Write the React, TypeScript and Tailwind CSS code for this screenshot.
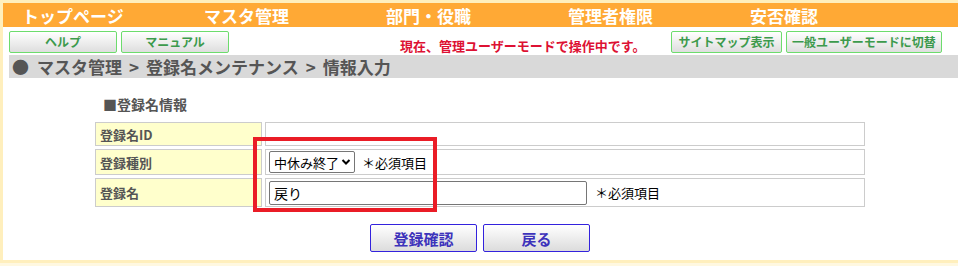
import React from "react";

const font = { fontFamily: '"Noto Sans CJK JP", "Noto Sans", sans-serif' };

function GreenBtn({ children, w }: { children: React.ReactNode; w: string }) {
  return (
    <div
      className={`${w} h-[22px] flex items-center justify-center border border-[#6ddc6d] rounded-[2px] bg-gradient-to-b from-white to-[#dedede] text-[#3c9a4c] text-[12px] font-bold leading-none whitespace-nowrap`}
    >
      {children}
    </div>
  );
}

function BlueBtn({ children }: { children: React.ReactNode }) {
  return (
    <div className="w-[107px] h-[28px] flex items-center justify-center border border-[#3322dd] rounded-[2px] bg-gradient-to-b from-white to-[#dcdcdc] text-[#3d33bb] text-[15px] font-bold leading-none">
      {children}
    </div>
  );
}

export default function App() {
  const nav = ["トップページ", "マスタ管理", "部門・役職", "管理者権限", "安否確認"];
  return (
    <div className="w-[958px] h-[266px] bg-[#fff8e0] overflow-hidden" style={font}>
      <div className="h-[263px] bg-white border-l-[3px] border-t-[3px] border-b-[3px] border-[#ffefbd] flex flex-col">
        <div className="h-[24px] bg-[#ffa935] flex items-center">
          {nav.map((n) => (
            <div key={n} className="w-[182px] pl-[19px] text-white font-bold text-[17px] leading-none shrink-0">
              {n}
            </div>
          ))}
        </div>
        <div className="flex items-start pl-[6px] mt-[4px] h-[24px]">
          <GreenBtn w="w-[108px]">ヘルプ</GreenBtn>
          <div className="w-[4px]" />
          <GreenBtn w="w-[108px]">マニュアル</GreenBtn>
          <div className="ml-[171px] mt-[8px] text-[#dd1133] text-[13px] font-bold leading-none w-[271px] whitespace-nowrap">
            現在、管理ユーザーモードで操作中です。
          </div>
          <GreenBtn w="w-[111px]">サイトマップ表示</GreenBtn>
          <div className="w-[4px]" />
          <GreenBtn w="w-[156px]">一般ユーザーモードに切替</GreenBtn>
        </div>
        <div className="ml-[6px] h-[23px] bg-[#d9d9d9] flex items-center pl-[3px] text-[#555] text-[17px] font-bold leading-none whitespace-nowrap">
          <span>●</span>
          <span className="ml-[8px]">マスタ管理</span>
          <span className="mx-[7px]">&gt;</span>
          <span>登録名メンテナンス</span>
          <span className="mx-[7px]">&gt;</span>
          <span>情報入力</span>
        </div>
        <div className="relative ml-[89px] mt-[19px] w-[776px]">
          <div className="pl-[11px] text-[#555] text-[14px] font-bold leading-none">■登録名情報</div>
          <table className="mt-[8px] w-[776px] border-separate border-spacing-[3px] text-[13px] text-[#555]">
            <tbody>
              <tr>
                <td className="w-[167px] h-[24px] bg-[#ffffcc] border border-[#cccccc] pl-[4px] font-bold leading-none">登録名ID</td>
                <td className="border border-[#cccccc]"></td>
              </tr>
              <tr>
                <td className="h-[26px] bg-[#ffffcc] border border-[#cccccc] pl-[4px] font-bold leading-none">登録種別</td>
                <td className="border border-[#cccccc] pl-[3px]">
                  <div className="flex items-center">
                    <div className="w-[86px] h-[22px] border border-[#767676] rounded-[2px] flex items-center pl-[4px] text-[13px] text-black leading-none">
                      中休み終了
                      <svg width="10" height="8" viewBox="0 0 10 8" className="ml-[2px]">
                        <path d="M1.5 2 L5 5.5 L8.5 2" stroke="#000" strokeWidth="2" fill="none" />
                      </svg>
                    </div>
                    <span className="ml-[7px] text-black text-[13px] leading-none">＊必須項目</span>
                  </div>
                </td>
              </tr>
              <tr>
                <td className="h-[29px] bg-[#ffffcc] border border-[#cccccc] pl-[4px] font-bold leading-none">登録名</td>
                <td className="border border-[#cccccc] pl-[3px]">
                  <div className="flex items-center">
                    <div className="w-[318px] h-[24px] border border-[#767676] rounded-[2px] flex items-center pl-[4px] text-[14px] text-black leading-none">
                      戻り
                    </div>
                    <span className="ml-[8px] text-black text-[13px] leading-none">＊必須項目</span>
                  </div>
                </td>
              </tr>
            </tbody>
          </table>
          <div className="absolute left-[161px] top-[40px] w-[184px] h-[75px] border-[4px] border-[#ea1c26]" />
          <div className="flex gap-[6px] mt-[14px] ml-[278px]">
            <BlueBtn>登録確認</BlueBtn>
            <BlueBtn>戻る</BlueBtn>
          </div>
        </div>
      </div>
    </div>
  );
}
